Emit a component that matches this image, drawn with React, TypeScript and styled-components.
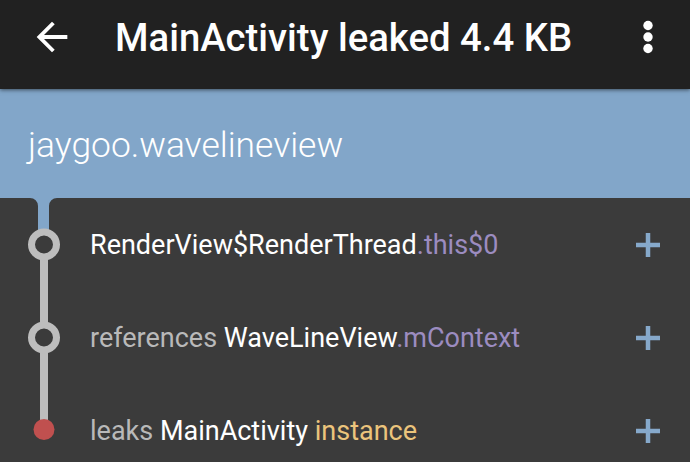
import React from "react";
import styled, { createGlobalStyle } from "styled-components";

const Global = createGlobalStyle`
  html, body { margin: 0; padding: 0; background: #3b3b3b; overflow: hidden; }
  body { font-family: Roboto, "Noto Sans", "Liberation Sans", sans-serif; }
`;

const Screen = styled.div`
  width: 690px;
  height: 462px;
  display: flex;
  flex-direction: column;
  background: #3b3b3b;
  overflow: hidden;
`;

const Toolbar = styled.header`
  position: relative;
  z-index: 2;
  height: 89px;
  box-sizing: border-box;
  flex: none;
  display: flex;
  align-items: center;
  padding: 0 19px 15px 29px;
  background: #212121;
  box-shadow: 0 1px 4px rgba(0, 0, 0, 0.55);
`;

const IconButton = styled.div`
  width: 46px;
  height: 46px;
  flex: none;
  display: flex;
  align-items: center;
  justify-content: center;
  color: #ffffff;
`;

const Title = styled.h1`
  flex: 1;
  margin: 0 0 0 40px;
  font-size: 38.3px;
  font-weight: 500;
  color: #ffffff;
  white-space: nowrap;
`;

const Header = styled.div`
  height: 109px;
  box-sizing: border-box;
  flex: none;
  display: flex;
  align-items: center;
  padding: 3px 0 0 28px;
  background: #82a6c9;
  color: #ffffff;
  font-size: 35.4px;
  font-weight: 300;
`;

const List = styled.div`
  display: flex;
  flex-direction: column;
`;

const Row = styled.div`
  height: 93px;
  display: flex;
  align-items: center;
`;

const Gutter = styled.svg`
  width: 90px;
  height: 93px;
  flex: none;
  display: block;
`;

const Label = styled.div`
  flex: 1;
  font-size: 27px;
  font-weight: 400;
  white-space: nowrap;
`;

const Part = styled.span<{ $tone: "white" | "gray" | "purple" | "yellow" }>`
  color: ${(p) =>
    p.$tone === "white"
      ? "#ffffff"
      : p.$tone === "gray"
      ? "#b9b9b9"
      : p.$tone === "purple"
      ? "#9c8cc0"
      : "#ebc47c"};
`;

const Expand = styled.div`
  width: 24px;
  height: 24px;
  flex: none;
  margin-right: 30px;
  display: flex;
`;

const LINE = "#bdbdbd";
const BLUE = "#82a6c9";
const DARK = "#3b3b3b";

type Kind = "first" | "middle" | "last";

function Timeline({ kind }: { kind: Kind }) {
  const cy = 46.5;
  const h = 93;
  return (
    <Gutter viewBox={`0 0 90 ${h}`}>
      {kind === "first" && (
        <>
          <rect x={38} y={0} width={11} height={cy} fill={BLUE} />
          <path d="M30 0 L38 0 L38 8 A8 8 0 0 0 30 0 Z" fill={BLUE} />
          <path d="M57 0 L49 0 L49 8 A8 8 0 0 1 57 0 Z" fill={BLUE} />
          <rect x={40} y={cy} width={8} height={h - cy} fill={LINE} />
        </>
      )}
      {kind === "middle" && <rect x={40} y={0} width={8} height={h} fill={LINE} />}
      {kind === "last" && <rect x={40} y={0} width={8} height={cy} fill={LINE} />}
      {kind === "last" ? (
        <circle cx={44} cy={cy - 1} r={10.5} fill="#c0504f" />
      ) : (
        <circle cx={44} cy={cy} r={12.5} fill={DARK} stroke={LINE} strokeWidth={7} />
      )}
    </Gutter>
  );
}

function PlusIcon() {
  return (
    <svg width="24" height="24" viewBox="0 0 24 24">
      <rect x="0" y="9.75" width="24" height="4.5" fill="#86a9cb" />
      <rect x="9.75" y="0" width="4.5" height="24" fill="#86a9cb" />
    </svg>
  );
}

const rows: { kind: Kind; parts: { t: string; tone: "white" | "gray" | "purple" | "yellow" }[] }[] = [
  {
    kind: "first",
    parts: [
      { t: "RenderView$RenderThread", tone: "white" },
      { t: ".this$0", tone: "purple" },
    ],
  },
  {
    kind: "middle",
    parts: [
      { t: "references ", tone: "gray" },
      { t: "WaveLineView", tone: "white" },
      { t: ".mContext", tone: "purple" },
    ],
  },
  {
    kind: "last",
    parts: [
      { t: "leaks ", tone: "gray" },
      { t: "MainActivity ", tone: "white" },
      { t: "instance", tone: "yellow" },
    ],
  },
];

export default function App() {
  return (
    <>
      <Global />
      <Screen>
        <Toolbar>
          <IconButton>
            <svg width="46" height="46" viewBox="0 0 24 24" fill="currentColor">
              <path d="M20 11H7.83l5.59-5.59L12 4l-8 8 8 8 1.41-1.41L7.83 13H20v-2z" />
            </svg>
          </IconButton>
          <Title>MainActivity leaked 4.4 KB</Title>
          <IconButton>
            <svg width="46" height="46" viewBox="0 0 46 46" fill="currentColor">
              <circle cx="23" cy="11.5" r="4.7" />
              <circle cx="23" cy="23" r="4.7" />
              <circle cx="23" cy="34.5" r="4.7" />
            </svg>
          </IconButton>
        </Toolbar>
        <Header>jaygoo.wavelineview</Header>
        <List>
          {rows.map((r, i) => (
            <Row key={i}>
              <Timeline kind={r.kind} />
              <Label>
                {r.parts.map((p, j) => (
                  <Part key={j} $tone={p.tone}>
                    {p.t}
                  </Part>
                ))}
              </Label>
              <Expand>
                <PlusIcon />
              </Expand>
            </Row>
          ))}
        </List>
      </Screen>
    </>
  );
}
